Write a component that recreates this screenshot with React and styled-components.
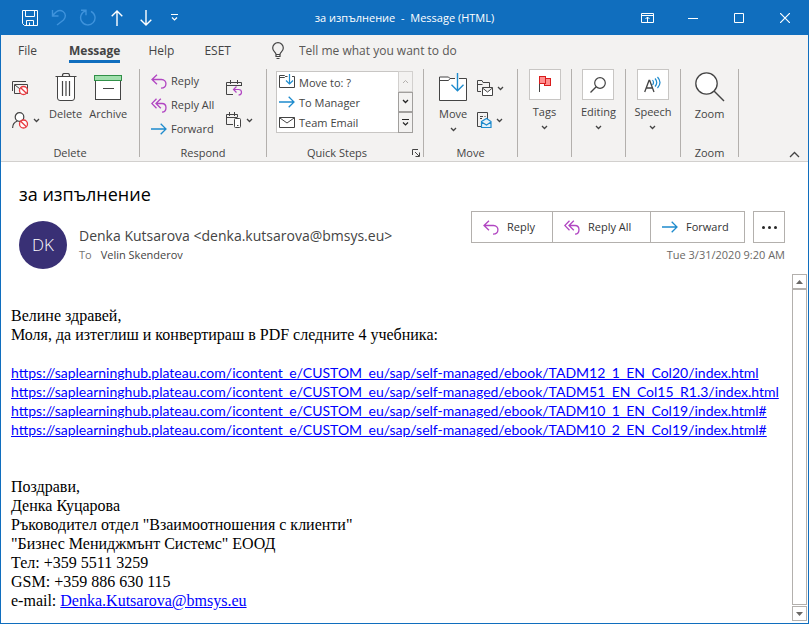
import React from "react";
import styled, { createGlobalStyle } from "styled-components";

const GlobalStyle = createGlobalStyle`
  *, *::before, *::after { box-sizing: border-box; }
  html, body { margin: 0; padding: 0; }
  body { background: #fff; color: #444; font: 12px/16px "Open Sans", "Noto Sans", sans-serif; }
  button, input { font: inherit; color: inherit; }
  button { margin: 0; padding: 0; border: 0; background: none; white-space: nowrap; }
  svg { display: block; flex: none; }
`;

const INK = "#444444";
const PURPLE = "#b146c2";
const BLUE = "#1e8bcd";
const RED = "#e8393f";

const Window = styled.div`
  display: flex;
  flex-direction: column;
  min-height: 100vh;
  border: solid #106ebe;
  border-width: 0 1px 1px;
  background: #fff;
`;

/* ---------- title bar ---------- */
const TitleBar = styled.header`
  display: grid;
  grid-template-columns: 1fr auto 1fr;
  align-items: stretch;
  height: 35px;
  background: #106ebe;
  color: #fff;
`;
const QuickAccess = styled.div`
  display: flex;
  padding-left: 14px;
`;
const QuickButton = styled.button`
  display: grid;
  place-items: center;
  width: 29px;
  color: ${(p) => (p.disabled ? "#3f93dc" : "#fff")};
`;
const WindowTitle = styled.h1`
  margin: 0;
  align-self: center;
  font-size: 11px;
  font-weight: 400;
  line-height: 16px;
  white-space: pre;
`;
const WindowControls = styled.div`
  display: flex;
  justify-content: flex-end;
`;
const ControlButton = styled.button`
  display: grid;
  place-items: center;
  width: 46px;
`;

/* ---------- tabs ---------- */
const TabRow = styled.nav`
  display: flex;
  align-items: flex-start;
  height: 34px;
  padding: 7px 0 0 17px;
  background: #f3f2f1;
  font-size: 12px;
  line-height: 18px;
`;
const Tab = styled.button`
  height: 21px;
  margin-right: ${(p) => p.$gap}px;
  font-weight: ${(p) => (p.$active ? 700 : 400)};
  border-bottom: 3px solid ${(p) => (p.$active ? "#106ebe" : "transparent")};
`;
const TellMe = styled.label`
  display: flex;
  flex: 1;
  align-items: center;
  gap: 15px;
`;
const TellMeInput = styled.input`
  flex: 1;
  height: 18px;
  padding: 0;
  border: 0;
  outline: 0;
  background: none;
  &::placeholder { color: #5a5856; opacity: 1; }
`;

/* ---------- ribbon ---------- */
const Ribbon = styled.section`
  display: flex;
  height: 93px;
  border-bottom: 1px solid #d2d0ce;
  background: #f3f2f1;
  font-size: 11px;
`;
const Group = styled.div`
  display: flex;
  flex: none;
  flex-direction: column;
  width: ${(p) => p.$width}px;
`;
const Divider = styled.div`
  flex: none;
  width: 1px;
  margin-bottom: 4px;
  background: #b3b0ad;
`;
const GroupBody = styled.div`
  display: flex;
  flex: 1;
  justify-content: ${(p) => (p.$center ? "center" : "flex-start")};
  gap: ${(p) => p.$gap || 0}px;
  padding-left: ${(p) => p.$indent || 0}px;
`;
const GroupFooter = styled.div`
  display: flex;
  align-items: center;
  height: 16px;
  text-align: center;
`;
const GroupLabel = styled.span`
  flex: 1;
`;
const LauncherButton = styled.button`
  display: flex;
  justify-content: flex-end;
  width: 16px;
  padding-right: 3px;
`;
const BigButton = styled.button`
  display: flex;
  flex-direction: column;
  align-items: center;
  align-self: flex-start;
  padding-top: 2px;
`;
const BigIcon = styled.span`
  display: grid;
  place-items: center;
  height: 32px;
  margin-bottom: 3px;
`;
const BoxIcon = styled.span`
  display: grid;
  place-items: center;
  width: 32px;
  height: 31px;
  margin-bottom: 4px;
  border: 1px solid #c8c6c4;
  background: #fff;
`;
const BoxButton = styled(BigButton)`
  padding-top: 0;
`;
const ChevronSlot = styled.span`
  display: grid;
  place-items: center;
  height: 15px;
`;
const SmallColumn = styled.div`
  display: flex;
  flex-direction: column;
  width: ${(p) => p.$width}px;
  padding-top: ${(p) => p.$top || 0}px;
`;
const SmallButton = styled.button`
  display: flex;
  align-items: center;
  gap: 4px;
  height: ${(p) => p.$height || 24}px;
`;

const QuickSteps = styled.div`
  display: flex;
  width: 137px;
  height: 62px;
  margin-top: 2px;
`;
const StepList = styled.div`
  display: flex;
  flex: 1;
  flex-direction: column;
  border: 1px solid #c8c6c4;
  border-right: 0;
  background: #fff;
`;
const Step = styled.button`
  display: flex;
  align-items: center;
  flex: 1;
  gap: 4px;
  padding-left: 2px;
`;
const StepText = styled.span`
  padding-top: 1px;
  line-height: 16px;
`;
const StepScroll = styled.div`
  display: grid;
  grid-template-rows: repeat(3, 1fr);
  width: 15px;
`;
const StepArrow = styled.button`
  display: grid;
  place-items: center;
  border: 1px solid ${(p) => (p.disabled ? "#d2d0ce" : "#a19f9d")};
  color: ${(p) => (p.disabled ? "#b3b0ad" : "#262626")};
`;
const CollapseButton = styled.button`
  align-self: flex-end;
  margin: 0 8px 3px auto;
`;

/* ---------- message header ---------- */
const MessageHeader = styled.section`
  padding: 20px 23px 5px 18px;
`;
const Subject = styled.h2`
  margin: 0 0 5px;
  color: #000;
  font-size: 18px;
  font-weight: 400;
  line-height: 24px;
`;
const HeaderRow = styled.div`
  display: flex;
  align-items: flex-start;
`;
const Avatar = styled.div`
  display: grid;
  place-items: center;
  flex: none;
  width: 48px;
  height: 48px;
  margin: 10px 12px 0 0;
  border-radius: 50%;
  background: #393075;
  color: #fff;
  font-size: 17px;
  font-weight: 300;
`;
const Sender = styled.div`
  flex: 1;
  min-width: 0;
  padding-top: 14px;
`;
const SenderName = styled.div`
  font-size: 14px;
  line-height: 22px;
  white-space: nowrap;
`;
const Recipient = styled.div`
  display: flex;
  gap: 9px;
  color: ${INK};
  font-size: 11px;
`;
const Muted = styled.span`
  color: #767472;
`;
const HeaderActions = styled.div`
  display: flex;
  flex-direction: column;
  align-items: flex-end;
  gap: 4px;
  color: #6a6866;
  font-size: 11px;
`;
const ActionRow = styled.div`
  display: flex;
  gap: 8px;
  color: #333;
`;
const ActionGroup = styled.div`
  display: flex;
  border: 1px solid #b3b0ad;
`;
const ActionButton = styled.button`
  display: flex;
  align-items: center;
  gap: 8px;
  min-width: ${(p) => p.$width}px;
  height: 30px;
  padding: 0 15px 0 11px;
  & + & { border-left: 1px solid #b3b0ad; }
`;
const MoreButton = styled.button`
  display: grid;
  place-items: center;
  width: 32px;
  height: 32px;
  border: 1px solid #b3b0ad;
`;

/* ---------- message body ---------- */
const BodyPane = styled.main`
  display: flex;
  flex: 1;
  padding: 0 1px 2px 0;
`;
const MessageText = styled.article`
  flex: 1;
  min-width: 0;
  padding: 32px 10px 8px;
  color: #000;
  font: 16px/19px "Liberation Serif", "Times New Roman", serif;
`;
const Line = styled.div`
  min-height: 19px;
  white-space: nowrap;
`;
const Link = styled.a`
  color: #0000ff;
  text-decoration: underline;
`;
const UrlLink = styled(Link)`
  font-family: Lato, "Open Sans", sans-serif;
  font-size: 14px;
`;
const ScrollBar = styled.div`
  display: flex;
  flex-direction: column;
  width: 15px;
`;
const ScrollArrow = styled.button`
  display: grid;
  place-items: center;
  height: 15px;
  border: 1px solid #b3b0ad;
`;
const ScrollThumb = styled.div`
  flex: 1;
  margin-bottom: 1px;
  border: 1px solid #b3b0ad;
`;

/* ---------- icons ---------- */
const Icon = ({ w, h, children, color = INK, crisp }) => (
  <svg
    width={w}
    height={h}
    viewBox={`0 0 ${w} ${h}`}
    fill="none"
    stroke={color}
    shapeRendering={crisp ? "crispEdges" : undefined}
    aria-hidden="true"
  >
    {children}
  </svg>
);

const Chevron = ({ color = INK }) => (
  <Icon w={7} h={5} color={color}>
    <path d="M1 1l2.5 2.5L6 1" strokeWidth="1.3" />
  </Icon>
);
const SaveIcon = () => (
  <Icon w={16} h={16} color="currentColor">
    <path d="M.5.5h15v15h-13l-2-2zM3.5.5v6h9v-6M4.500 15.500v-5h7v5M7.500 12.500v3" />
  </Icon>
);
const UndoIcon = () => (
  <Icon w={16} h={17} color="currentColor">
    <path d="M1.500 1v6h6M1.500 7C5 2 9 .5 12 2.500s3 6 .5 8.500L6 16" strokeWidth="1.4" />
  </Icon>
);
const RedoIcon = () => (
  <Icon w={17} h={17} color="currentColor">
    <path d="M2 1.300h5v5M12 2.300a7.200 7.200 0 1 1-5-.5" strokeWidth="1.4" />
  </Icon>
);
const VerticalArrow = ({ down }) => (
  <Icon w={12} h={16} color="currentColor">
    <path d={down ? "M6 0v15M.7 9.7L6 15l5.3-5.3" : "M6 16V1M.7 6.3L6 1l5.3 5.3"} strokeWidth="1.4" />
  </Icon>
);
const BarChevron = ({ color = "currentColor" }) => (
  <Icon w={7} h={7} color={color}>
    <path d="M0 .5h7M1 3.500L3.500 6 6 3.500" strokeWidth="1.2" />
  </Icon>
);
const RibbonOptionsIcon = () => (
  <Icon w={13} h={10} color="currentColor">
    <path d="M.5.5h12v9H.5zM.5 2.500h12M6.500 9.500V4M4.500 6l2-2 2 2" />
  </Icon>
);
const MinimizeIcon = () => (
  <Icon w={10} h={10} color="currentColor"><path d="M0 5.500h10" /></Icon>
);
const MaximizeIcon = () => (
  <Icon w={10} h={10} color="currentColor"><path d="M.5.5h9v9h-9z" /></Icon>
);
const CloseIcon = () => (
  <Icon w={10} h={10} color="currentColor"><path d="M0 0l10 10M10 0L0 10" strokeWidth="1.2" /></Icon>
);
const BulbIcon = () => (
  <Icon w={12} h={18}>
    <path d="M4 12.500c0-2.500-3.300-3-3.300-6.500a5.300 5.300 0 0 1 10.600 0c0 3.500-3.300 4-3.300 6.500zM4 12.500v2h4v-2M4.500 16.500h3" strokeWidth="1.2" />
  </Icon>
);
const NoSign = ({ cx, cy }) => (
  <g>
    <circle cx={cx} cy={cy} r="4" fill="#fff" stroke={RED} strokeWidth="1.3" />
    <path d={`M${cx - 2.8} ${cy - 2.8}l5.6 5.6`} stroke={RED} strokeWidth="1.3" />
  </g>
);
const IgnoreIcon = () => (
  <Icon w={17} h={15}>
    <path d="M.5 10V.5H14M2.500 12.500v-9h13v9z" />
    <path d="M3 4l5 4" />
    <NoSign cx={11.5} cy={9.5} />
  </Icon>
);
const JunkIcon = () => (
  <Icon w={17} h={17}>
    <circle cx="7.5" cy="5" r="4.3" fill="#fff" strokeWidth="1.2" />
    <path d="M.6 16c0-4 2-6 4.800-7" strokeWidth="1.2" />
    <NoSign cx={11.5} cy={12} />
  </Icon>
);
const TrashIcon = () => (
  <Icon w={22} h={28}>
    <path d="M2.500 4v21q0 2.500 2.500 2.500h12q2.500 0 2.500-2.500V4" fill="#fff" />
    <path d="M.5 3.500h21M7.500 3.500v-1q0-2 2-2h3q2 0 2 2v1M7.500 8v15M11 8v15M14.500 8v15" strokeWidth="1.2" />
  </Icon>
);
const ArchiveIcon = () => (
  <Icon w={28} h={25} crisp>
    <path d="M1.500 5.500h25v19h-25z" fill="#fff" />
    <path d="M.5.5h27v5H.5z" fill="#a0dfad" stroke="#309048" />
    <path d="M8.500 13.500h11" />
  </Icon>
);
const ReplyIcon = () => (
  <Icon w={16} h={15} color={PURPLE}>
    <path d="M6 .7L1 5.500l5 4.800M1 5.500h9.500c6 0 6 8.700-.5 8.700" strokeWidth="1.3" />
  </Icon>
);
const ReplyAllIcon = () => (
  <Icon w={16} h={15} color={PURPLE}>
    <path d="M5.500.7L.8 5.500l4.700 4.800M9.800.7L5 5.500l4.800 4.800M5 5.500h6c5.300 0 5.300 8.700 0 8.700" strokeWidth="1.3" />
  </Icon>
);
const ForwardIcon = () => (
  <Icon w={16} h={12} color={BLUE}>
    <path d="M0 6h15M9.700.7L15 6l-5.300 5.300" strokeWidth="1.3" />
  </Icon>
);
const MeetingIcon = () => (
  <Icon w={17} h={16}>
    <path d="M7 14.500H.5v-12h15V6M.5 5.500h15M4.500 0v4M11.500 0v4" />
    <path d="M10.500 6.500L7.500 9.500l3 3M7.500 9.500h5c4 0 4 5.500 0 5.500" stroke={PURPLE} strokeWidth="1.2" />
  </Icon>
);
const MoreRespondIcon = () => (
  <Icon w={16} h={16}>
    <path d="M7 12.500H.5v-10h11V5M.5 5.500h11M3.500 0v4M8.500 0v4" />
    <rect x="8.5" y="6.5" width="6" height="9" rx="1" fill="#fff" />
    <path d="M11 13.500h1.500" />
  </Icon>
);
const MoveSmallIcon = () => (
  <Icon w={16} h={16}>
    <path d="M8.500 2.500h-2l-1-1h-5v12h15v-11H13M.5 3.500h5l1-1" fill="#fff" />
    <path d="M10.500 0v10M7 6.500l3.500 3.500L14 6.500" stroke={BLUE} strokeWidth="1.2" />
  </Icon>
);
const EnvelopeIcon = () => (
  <Icon w={16} h={11}>
    <path d="M.5.5h15v10H.5zM.5.7L8 6l7.500-5.300" fill="#fff" />
  </Icon>
);
const MoveIcon = () => (
  <Icon w={28} h={28}>
    <path d="M16 5.500h-5L9.500 4h-9v23.500h27v-22H20M.5 7.500h9l1.500-2" fill="#fff" />
    <path d="M18.500 0v18M12.500 11.700l6 6 6-6" stroke={BLUE} strokeWidth="1.4" />
  </Icon>
);
const RulesIcon = () => (
  <Icon w={16} h={16}>
    <path d="M4 11.500H.5V.5H5l1 2h6.500V7M.5 4.500h5" />
    <path d="M5.500 7.500h10v8h-10zM5.500 8l5 4 5-4" fill="#fff" />
  </Icon>
);
const ActionsIcon = () => (
  <Icon w={15} h={16}>
    <path d="M4 14.500H.5V.5h10V7M3 4.500h3M3 6.500h2M7.500 4.500h1" />
    <path d="M4.500 9.500l5-3 4.500 3v6H4.500zM4.500 10l5 3 4.500-3" fill="#e3f2fc" stroke={BLUE} strokeWidth="1.2" />
  </Icon>
);
const FlagIcon = () => (
  <Icon w={12} h={17} crisp>
    <path d="M.5 0v16" />
    <path d="M5.500 2.500h6v7h-6z" fill="#ff8f8f" stroke="#d91c1c" />
    <path d="M.5.5h6v7h-6z" fill="#ff8f8f" stroke="#d91c1c" />
  </Icon>
);
const SearchIcon = () => (
  <Icon w={16} h={16}>
    <circle cx="10" cy="6" r="5.3" strokeWidth="1.2" fill="#fff" />
    <path d="M6.200 9.800L.5 15.500" strokeWidth="1.3" />
  </Icon>
);
const SpeechIcon = () => (
  <Icon w={17} h={17}>
    <path d="M.7 16L5 4.500h.7L10 16M2.300 12h6" strokeWidth="1.3" />
    <path d="M8.500 4q2 2.500 0 5M11 2.500q3.500 4 0 8M13.500 1q5 5.500 0 11" stroke={BLUE} strokeWidth="1.2" />
  </Icon>
);
const ZoomIcon = () => (
  <Icon w={30} h={30}>
    <circle cx="11.5" cy="11.5" r="10.7" strokeWidth="1.3" fill="#fff" />
    <path d="M19 19l10 10" strokeWidth="1.4" />
  </Icon>
);
const LauncherIcon = () => (
  <Icon w={8} h={8}>
    <path d="M.5 6V.5H6M3 3l4 4M7.500 3.500v4h-4" />
  </Icon>
);
const CollapseIcon = () => (
  <Icon w={11} h={7}><path d="M1 6l4.500-4.500L10 6" strokeWidth="1.3" /></Icon>
);
const DotsIcon = () => (
  <Icon w={15} h={3} color="none">
    <g fill="#262626">
      <circle cx="1.5" cy="1.5" r="1.5" />
      <circle cx="7.5" cy="1.5" r="1.5" />
      <circle cx="13.5" cy="1.5" r="1.5" />
    </g>
  </Icon>
);
const Triangle = ({ down }) => (
  <Icon w={7} h={4} color="none">
    <path d={down ? "M0 0h7L3.500 4z" : "M0 4h7L3.500 0z"} fill="#6a6866" />
  </Icon>
);

/* ---------- composed parts ---------- */
const RibbonGroup = ({ width, label, launcher, children }) => (
  <>
    <Group $width={width}>
      {children}
      {label && (
        <GroupFooter>
          <GroupLabel>{label}</GroupLabel>
          {launcher && <LauncherButton aria-label={`${label} options`}><LauncherIcon /></LauncherButton>}
        </GroupFooter>
      )}
    </Group>
    <Divider />
  </>
);

const MenuGroup = ({ label, icon, width = 53 }) => (
  <RibbonGroup width={width}>
    <GroupBody $center>
      <BoxButton>
        <BoxIcon>{icon}</BoxIcon>
        {label}
        <ChevronSlot><Chevron /></ChevronSlot>
      </BoxButton>
    </GroupBody>
  </RibbonGroup>
);

const base = "https://saplearninghub.plateau.com/icontent_e/CUSTOM_eu/sap/self-managed/ebook/";
const books = [
  "TADM12_1_EN_Col20/index.html",
  "TADM51_EN_Col15_R1.3/index.html",
  "TADM10_1_EN_Col19/index.html#",
  "TADM10_2_EN_Col19/index.html#",
];
const signature = [
  "Поздрави,",
  "Денка Куцарова",
  'Ръководител отдел "Взаимоотношения с клиенти"',
  '"Бизнес Мениджмънт Системс" ЕООД',
  "Тел: +359 5511 3259",
  "GSM: +359 886 630 115",
];

export default function App() {
  return (
    <Window>
      <GlobalStyle />
      <TitleBar>
        <QuickAccess>
          <QuickButton aria-label="Save"><SaveIcon /></QuickButton>
          <QuickButton aria-label="Undo" disabled><UndoIcon /></QuickButton>
          <QuickButton aria-label="Redo" disabled><RedoIcon /></QuickButton>
          <QuickButton aria-label="Previous item"><VerticalArrow /></QuickButton>
          <QuickButton aria-label="Next item"><VerticalArrow down /></QuickButton>
          <QuickButton aria-label="Customize toolbar"><BarChevron /></QuickButton>
        </QuickAccess>
        <WindowTitle>{"за изпълнение  -  Message (HTML)"}</WindowTitle>
        <WindowControls>
          <ControlButton aria-label="Ribbon display options"><RibbonOptionsIcon /></ControlButton>
          <ControlButton aria-label="Minimize"><MinimizeIcon /></ControlButton>
          <ControlButton aria-label="Maximize"><MaximizeIcon /></ControlButton>
          <ControlButton aria-label="Close"><CloseIcon /></ControlButton>
        </WindowControls>
      </TitleBar>

      <TabRow>
        <Tab $gap={32}>File</Tab>
        <Tab $gap={28} $active>Message</Tab>
        <Tab $gap={30}>Help</Tab>
        <Tab $gap={41}>ESET</Tab>
        <TellMe>
          <BulbIcon />
          <TellMeInput aria-label="Tell me what you want to do" placeholder="Tell me what you want to do" />
        </TellMe>
      </TabRow>

      <Ribbon>
        <RibbonGroup width={138} label="Delete">
          <GroupBody $indent={11}>
            <SmallColumn $width={37} $top={3}>
              <SmallButton $height={32} aria-label="Ignore"><IgnoreIcon /></SmallButton>
              <SmallButton $height={32} aria-label="Junk"><JunkIcon /><Chevron /></SmallButton>
            </SmallColumn>
            <GroupBody $gap={7}>
              <BigButton><BigIcon><TrashIcon /></BigIcon>Delete</BigButton>
              <BigButton><BigIcon><ArchiveIcon /></BigIcon>Archive</BigButton>
            </GroupBody>
          </GroupBody>
        </RibbonGroup>

        <RibbonGroup width={126} label="Respond">
          <GroupBody $indent={11}>
            <SmallColumn $width={75}>
              <SmallButton><ReplyIcon />Reply</SmallButton>
              <SmallButton><ReplyAllIcon />Reply All</SmallButton>
              <SmallButton><ForwardIcon />Forward</SmallButton>
            </SmallColumn>
            <SmallColumn $width={30} $top={3}>
              <SmallButton $height={32} aria-label="Meeting"><MeetingIcon /></SmallButton>
              <SmallButton $height={32} aria-label="More respond actions"><MoreRespondIcon /><Chevron /></SmallButton>
            </SmallColumn>
          </GroupBody>
        </RibbonGroup>

        <RibbonGroup width={156} label="Quick Steps" launcher>
          <GroupBody $indent={9}>
            <QuickSteps>
              <StepList>
                <Step><MoveSmallIcon /><StepText>Move to: ?</StepText></Step>
                <Step><ForwardIcon /><StepText>To Manager</StepText></Step>
                <Step><EnvelopeIcon /><StepText>Team Email</StepText></Step>
              </StepList>
              <StepScroll>
                <StepArrow aria-label="Previous row" disabled>
                  <Icon w={7} h={5} color="currentColor"><path d="M1 4l2.500-2.500L6 4" /></Icon>
                </StepArrow>
                <StepArrow aria-label="Next row"><Chevron color="currentColor" /></StepArrow>
                <StepArrow aria-label="More quick steps"><BarChevron /></StepArrow>
              </StepScroll>
            </QuickSteps>
          </GroupBody>
        </RibbonGroup>

        <RibbonGroup width={93} label="Move">
          <GroupBody $indent={15} $gap={10}>
            <BigButton>
              <BigIcon><MoveIcon /></BigIcon>
              Move
              <ChevronSlot><Chevron /></ChevronSlot>
            </BigButton>
            <SmallColumn $width={30} $top={3}>
              <SmallButton $height={32} aria-label="Rules"><RulesIcon /><Chevron /></SmallButton>
              <SmallButton $height={32} aria-label="Actions"><ActionsIcon /><Chevron /></SmallButton>
            </SmallColumn>
          </GroupBody>
        </RibbonGroup>

        <MenuGroup label="Tags" icon={<FlagIcon />} />
        <MenuGroup label="Editing" icon={<SearchIcon />} />
        <MenuGroup label="Speech" icon={<SpeechIcon />} width={54} />

        <RibbonGroup width={57} label="Zoom">
          <GroupBody $center>
            <BigButton><BigIcon><ZoomIcon /></BigIcon>Zoom</BigButton>
          </GroupBody>
        </RibbonGroup>
        <CollapseButton aria-label="Collapse ribbon"><CollapseIcon /></CollapseButton>
      </Ribbon>

      <MessageHeader>
        <Subject>за изпълнение</Subject>
        <HeaderRow>
          <Avatar>DK</Avatar>
          <Sender>
            <SenderName>Denka Kutsarova &lt;denka.kutsarova@bmsys.eu&gt;</SenderName>
            <Recipient><Muted>To</Muted><span>Velin Skenderov</span></Recipient>
          </Sender>
          <HeaderActions>
            <ActionRow>
              <ActionGroup>
                <ActionButton $width={80}><ReplyIcon />Reply</ActionButton>
                <ActionButton $width={98}><ReplyAllIcon />Reply All</ActionButton>
                <ActionButton $width={94}><ForwardIcon />Forward</ActionButton>
              </ActionGroup>
              <MoreButton aria-label="More actions"><DotsIcon /></MoreButton>
            </ActionRow>
            <time dateTime="2020-03-31T09:20">Tue 3/31/2020 9:20 AM</time>
          </HeaderActions>
        </HeaderRow>
      </MessageHeader>

      <BodyPane>
        <MessageText>
          <Line>Велине здравей,</Line>
          <Line>Моля, да изтеглиш и конвертираш в PDF следните 4 учебника:</Line>
          <Line />
          {books.map((book) => (
            <Line key={book}><UrlLink href={base + book}>{base + book}</UrlLink></Line>
          ))}
          <Line />
          <Line />
          {signature.map((text) => <Line key={text}>{text}</Line>)}
          <Line>e-mail: <Link href="mailto:Denka.Kutsarova@bmsys.eu">Denka.Kutsarova@bmsys.eu</Link></Line>
        </MessageText>
        <ScrollBar>
          <ScrollArrow aria-label="Scroll up"><Triangle /></ScrollArrow>
          <ScrollThumb />
          <ScrollArrow aria-label="Scroll down"><Triangle down /></ScrollArrow>
        </ScrollBar>
      </BodyPane>
    </Window>
  );
}
